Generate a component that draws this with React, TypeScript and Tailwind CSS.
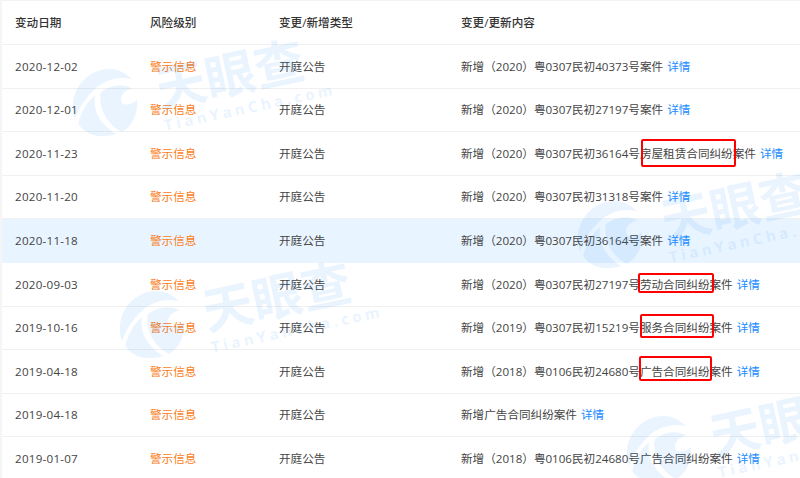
import React from 'react';

const font = { fontFamily: '"Open Sans", "Noto Sans CJK SC", sans-serif' };

interface Row {
  date: string;
  content: string;
  active?: boolean;
}

const rows: Row[] = [
  { date: '2020-12-02', content: '新增（2020）粤0307民初40373号案件' },
  { date: '2020-12-01', content: '新增（2020）粤0307民初27197号案件' },
  { date: '2020-11-23', content: '新增（2020）粤0307民初36164号房屋租赁合同纠纷案件' },
  { date: '2020-11-20', content: '新增（2020）粤0307民初31318号案件' },
  { date: '2020-11-18', content: '新增（2020）粤0307民初36164号案件', active: true },
  { date: '2020-09-03', content: '新增（2020）粤0307民初27197号劳动合同纠纷案件' },
  { date: '2019-10-16', content: '新增（2019）粤0307民初15219号服务合同纠纷案件' },
  { date: '2019-04-18', content: '新增（2018）粤0106民初24680号广告合同纠纷案件' },
  { date: '2019-04-18', content: '新增广告合同纠纷案件' },
  { date: '2019-01-07', content: '新增（2018）粤0106民初24680号广告合同纠纷案件' },
];

// Swirl logo + name, repeated over the table
function Watermark({ className }: { className: string }) {
  return (
    <div className={`absolute flex w-[264px] items-center gap-[20px] -rotate-[12deg] text-[#1f8fff] opacity-[0.09] ${className}`}>
      <svg viewBox="0 0 100 100" className="h-[70px] w-[70px] shrink-0" fill="currentColor" aria-hidden="true">
        <path d="M6 64C2 30 28 3 60 3C76 3 90 12 97 25C80 16 58 18 42 28C26 38 14 50 6 64Z" />
        <path d="M9 72C17 54 29 43 41 37C34 53 37 77 59 97C36 99 17 90 9 72Z" />
        <path d="M50 34C66 26 84 28 95 38C86 38 78 42 76 50C74 58 84 63 98 56C96 76 83 91 68 96C48 80 42 54 50 34Z" />
      </svg>
      <div className="flex flex-col pt-[14px]">
        <span className="text-[50px] font-bold leading-[54px]">天眼查</span>
        <span className="text-[15px] font-bold leading-[18px] tracking-[3.6px] whitespace-nowrap">TianYanCha.com</span>
      </div>
    </div>
  );
}

function RedBox({ className }: { className: string }) {
  return <div className={`absolute rounded-[2px] border-2 border-[#f00] ${className}`} />;
}

export default function App() {
  return (
    <div className="relative h-[478px] w-[800px] overflow-hidden bg-white pl-[2px] text-[11.6px] text-[#444]" style={font}>
      <div className="absolute inset-y-0 left-0 w-[2px] bg-[#f5f5f5]" />
      <div className="h-[1.4px] border-t border-[#f3f3f3]" />

      {/* Header */}
      <div className="grid h-[43.6px] grid-cols-[135px_129px_182px_1fr] items-center border-b border-[#f0f0f0] pl-[13px] font-medium text-[#333]">
        <div>变动日期</div>
        <div>风险级别</div>
        <div>变更/新增类型</div>
        <div>变更/更新内容</div>
      </div>

      {/* Rows */}
      {rows.map((row, i) => (
        <div
          key={i}
          className={`grid h-[43.6px] grid-cols-[135px_129px_182px_1fr] items-center border-b pl-[13px] ${
            row.active ? 'border-transparent bg-[#e8f4ff]' : 'border-[#f0f0f0]'
          }`}
        >
          <div className="tracking-[0.25px]">{row.date}</div>
          <div className="text-[#fa7d22]">警示信息</div>
          <div>开庭公告</div>
          <div className="whitespace-nowrap">
            {row.content}
            <span className="ml-[4px] text-[#1a8cff]">详情</span>
          </div>
        </div>
      ))}

      <Watermark className="left-[66px] top-[40px]" />
      <Watermark className="left-[113px] top-[262px]" />
      <Watermark className="left-[571px] top-[172px]" />
      <Watermark className="left-[620px] top-[387px]" />

      <RedBox className="left-[641px] top-[139px] h-[28px] w-[95px]" />
      <RedBox className="left-[638px] top-[273px] h-[20px] w-[76px]" />
      <RedBox className="left-[640px] top-[314px] h-[24px] w-[74px]" />
      <RedBox className="left-[639px] top-[356px] h-[25px] w-[73px]" />
    </div>
  );
}
